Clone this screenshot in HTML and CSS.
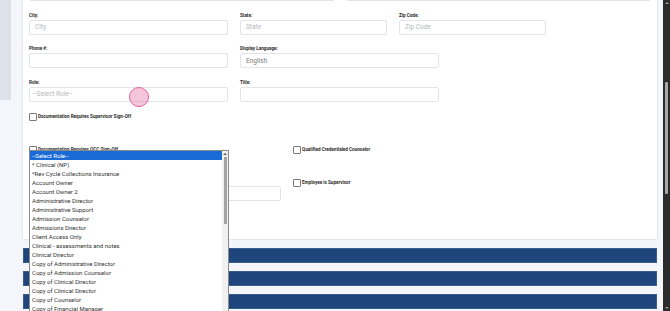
FILE: index.html
```html
<!DOCTYPE html>
<html lang="en">
<head>
    <meta charset="UTF-8">
    <meta name="viewport" content="width=device-width, initial-scale=1.0">
    <title>Edit Staff</title>
    <link rel="stylesheet" href="styles.css">
</head>
<body>

    <div class="layout">
        <aside class="sidebar"><div class="sidebar-panel"></div></aside>

        <main class="content">
            <section class="card">
                <div class="row row-cut">
                    <span class="input w-a"></span>
                    <span class="input w-b"></span>
                </div>
                <div class="row">
                    <div class="field w-col">
                        <label for="city">City:</label>
                        <input class="input" type="text" id="city" placeholder="City">
                    </div>
                    <div class="field w-third">
                        <label for="state">State:</label>
                        <input class="input" type="text" id="state" placeholder="State">
                    </div>
                    <div class="field w-third">
                        <label for="zip">Zip Code:</label>
                        <input class="input" type="text" id="zip" placeholder="Zip Code">
                    </div>
                </div>
                <div class="row">
                    <div class="field w-col">
                        <label for="phone">Phone #:</label>
                        <input class="input" type="text" id="phone">
                    </div>
                    <div class="field w-col">
                        <label for="lang">Display Language:</label>
                        <input class="input" type="text" id="lang" value="English">
                    </div>
                </div>
                <div class="row">
                    <div class="field w-col">
                        <label>Role:</label>
                        <div class="input select">--Select Role--</div>
                    </div>
                    <div class="field w-col">
                        <label for="title">Title:</label>
                        <input class="input" type="text" id="title">
                    </div>
                </div>

                <div class="lower">
                    <label class="check"><span class="box"></span>Documentation Requires Supervisor Sign-Off</label>
                    <span></span>
                    <label class="check"><span class="box"></span>Documentation Requires QCC Sign-Off</label>
                    <label class="check"><span class="box"></span>Qualified Credentialed Counselor</label>
                    <div class="field">
                        <div class="label-space"></div>
                        <input class="input" type="text" id="supervisor">
                    </div>
                    <label class="check"><span class="box"></span>Employee is Supervisor</label>
                </div>

                <div class="role-list">
                    <ul>
                        <li class="active">--Select Role--</li>
                        <li>* Clinical (NP)</li>
                        <li>*Rev Cycle Collections Insurance</li>
                        <li>Account Owner</li>
                        <li>Account Owner 2</li>
                        <li>Administrative Director</li>
                        <li>Administrative Support</li>
                        <li>Admission Counselor</li>
                        <li>Admissions Director</li>
                        <li>Client Access Only</li>
                        <li>Clinical - assessments and notes</li>
                        <li>Clinical Director</li>
                        <li>Copy of Administrative Director</li>
                        <li>Copy of Admission Counselor</li>
                        <li>Copy of Clinical Director</li>
                        <li>Copy of Clinical Director</li>
                        <li>Copy of Counselor</li>
                        <li>Copy of Financial Manager</li>
                    </ul>
                    <div class="list-scroll">
                        <span class="arrow-up"></span>
                        <span class="list-thumb"></span>
                    </div>
                </div>
            </section>

            <div class="bar"></div>
            <div class="bar"></div>
            <div class="bar"></div>
        </main>

        <div class="page-scroll">
            <span class="page-arrow up"></span>
            <span class="page-thumb"></span>
            <span class="page-arrow down"></span>
        </div>
    </div>

    <span class="tap"></span>

</body>
</html>
```

FILE: styles.css
```css
* {
    box-sizing: border-box;
}
body {
    font-family: 'Roboto', 'Liberation Sans', sans-serif;
    margin: 0;
    padding: 0;
    height: 311px;
    overflow: hidden;
    background-color: #f5f6fb;
    color: #333;
}
.layout {
    display: flex;
    height: 311px;
}
.sidebar {
    width: 11px;
    flex: none;
}
.sidebar-panel {
    height: 100px;
    background-color: #dde1ea;
}
.content {
    flex: 1;
    padding: 0 6px 0 12px;
}
.card {
    position: relative;
    margin-top: -14px;
    padding: 0 6px 38px;
    background-color: #fff;
    box-shadow: 0 0 2px rgba(0, 0, 0, 0.18);
}
.row {
    display: flex;
    gap: 12px;
    margin-top: 11.5px;
}
.row-cut {
    margin-top: 0;
    gap: 11px;
}
.w-a {
    width: 189px;
}
.w-b {
    width: 196px;
}
.w-col {
    width: 199px;
}
.w-third {
    width: 147px;
}
.field label {
    display: block;
    font-size: 4.6px;
    font-weight: 700;
    line-height: 6px;
    margin-bottom: 1px;
    color: #2b2b2b;
    white-space: nowrap;
}
.label-space {
    height: 7px;
}
.input {
    display: block;
    width: 100%;
    height: 15px;
    margin: 0;
    padding: 0 5px;
    border: 1px solid #e2e4e9;
    border-radius: 2px;
    background-color: #fff;
    font-family: 'Roboto', 'Liberation Sans', sans-serif;
    font-size: 6.5px;
    line-height: 13px;
    color: #7a7a7a;
    outline: none;
}
.input::placeholder {
    color: #b5b8be;
}
.select {
    color: #b5b8be;
    padding-left: 3px;
}
.lower {
    display: grid;
    grid-template-columns: 252px 252px;
    column-gap: 12px;
    row-gap: 25px;
    margin-top: 11px;
}
.check {
    display: flex;
    align-items: center;
    gap: 1px;
    height: 8px;
    font-size: 4.6px;
    font-weight: 700;
    color: #2b2b2b;
    white-space: nowrap;
}
.box {
    flex: none;
    width: 8px;
    height: 8px;
    border: 1px solid #7a7a7a;
    border-radius: 1px;
    background-color: #fff;
}
.role-list {
    position: absolute;
    left: 6px;
    top: 164px;
    width: 200px;
    height: 175px;
    display: flex;
    border: 1px solid #8a8a8a;
    background-color: #fff;
}
.role-list ul {
    flex: 1;
    list-style: none;
    margin: 0;
    padding: 0;
}
.role-list li {
    height: 9px;
    line-height: 9px;
    padding-left: 2px;
    font-size: 6px;
    color: #333;
    white-space: nowrap;
}
.role-list li.active {
    background-color: #1b6bd6;
    color: #fff;
}
.list-scroll {
    width: 6px;
    display: flex;
    flex-direction: column;
    align-items: center;
    background-color: #f1f1f1;
}
.arrow-up {
    margin-top: 2px;
    border-left: 2px solid transparent;
    border-right: 2px solid transparent;
    border-bottom: 2px solid #555;
}
.list-thumb {
    width: 3px;
    height: 67px;
    margin-top: 2px;
    background-color: #a3a3a3;
}
.bar {
    height: 15px;
    margin-top: 8px;
    background-color: #1f467c;
    border: 1px solid #3a5c8b;
}
.card + .bar {
    margin-top: 9px;
}
.page-scroll {
    width: 7px;
    flex: none;
    display: flex;
    flex-direction: column;
    align-items: center;
    background-color: #2b2b2b;
}
.page-arrow {
    border-left: 2px solid transparent;
    border-right: 2px solid transparent;
}
.page-arrow.up {
    margin-top: 2px;
    border-bottom: 2px solid #9a9a9a;
}
.page-arrow.down {
    margin-top: auto;
    margin-bottom: 2px;
    border-top: 2px solid #9a9a9a;
}
.page-thumb {
    width: 3px;
    height: 112px;
    margin-top: 78px;
    border-radius: 1px;
    background-color: #a8a8a8;
}
.tap {
    position: absolute;
    left: 129px;
    top: 87px;
    width: 20px;
    height: 20px;
    border-radius: 50%;
    border: 1px solid #e0649e;
    background-color: rgba(236, 140, 186, 0.5);
}
```
